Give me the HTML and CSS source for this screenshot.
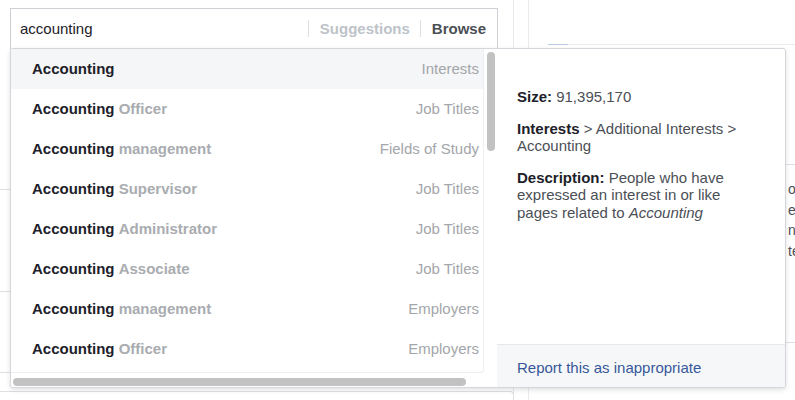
FILE: index.html
```html
<!DOCTYPE html>
<html lang="en">
<head>
<meta charset="utf-8">
<title>Detailed targeting</title>
<link rel="stylesheet" href="styles.css">
</head>
<body>
<div class="page">
  <div class="main-col">
    <div class="search">
      <span class="query">accounting</span>
      <div class="modes">
        <span class="sep"></span>
        <span class="mode mode-off">Suggestions</span>
        <span class="sep"></span>
        <span class="mode mode-on">Browse</span>
      </div>
    </div>
    <div class="bg-rows">
      <div class="bg-row r1"></div>
      <div class="bg-row r2"></div>
      <div class="bg-row r3"></div>
    </div>
    <div class="bg-card"></div>
  </div>
  <div class="gutter"></div>
  <div class="side">
    <div class="side-head"><span class="tab-mark"></span></div>
    <div class="side-card">
      <p>o</p>
      <p>er</p>
      <p>n</p>
      <p>te</p>
    </div>
  </div>

  <div class="dropdown">
    <div class="list-wrap">
      <ul class="list">
        <li class="row active"><span class="name"><b>Accounting</b></span><span class="kind">Interests</span></li>
        <li class="row"><span class="name"><b>Accounting</b> <i>Officer</i></span><span class="kind">Job Titles</span></li>
        <li class="row"><span class="name"><b>Accounting</b> <i>management</i></span><span class="kind">Fields of Study</span></li>
        <li class="row"><span class="name"><b>Accounting</b> <i>Supervisor</i></span><span class="kind">Job Titles</span></li>
        <li class="row"><span class="name"><b>Accounting</b> <i>Administrator</i></span><span class="kind">Job Titles</span></li>
        <li class="row"><span class="name"><b>Accounting</b> <i>Associate</i></span><span class="kind">Job Titles</span></li>
        <li class="row"><span class="name"><b>Accounting</b> <i>management</i></span><span class="kind">Employers</span></li>
        <li class="row"><span class="name"><b>Accounting</b> <i>Officer</i></span><span class="kind">Employers</span></li>
      </ul>
      <div class="vthumb"></div>
      <div class="hthumb"></div>
    </div>
    <div class="detail">
      <div class="detail-body">
        <p><b>Size:</b> 91,395,170</p>
        <p><b>Interests</b> &gt; Additional Interests &gt; Accounting</p>
        <p><b>Description:</b> People who have expressed an interest in or like pages related to <em>Accounting</em></p>
      </div>
      <div class="detail-foot"><a href="#" class="report">Report this as inappropriate</a></div>
    </div>
  </div>
</div>
</body>
</html>
```

FILE: styles.css
```css
* { box-sizing: border-box; }
html, body { margin: 0; padding: 0; background: #fff; }
body {
  font-family: "Liberation Sans", Arial, Helvetica, sans-serif;
  font-size: 15px;
  color: #1d2129;
}
.page {
  position: relative;
  width: 795px;
  height: 400px;
  overflow: hidden;
  display: flex;
}

/* background columns */
.main-col {
  width: 514px;
  border-right: 1px solid #e9ebee;
  display: flex;
  flex-direction: column;
}
.search {
  margin: 8px 0 0 10px;
  width: 488px;
  height: 42px;
  border: 1px solid #ccd0d5;
  display: flex;
  align-items: center;
  justify-content: space-between;
  padding: 0 11px 2px 9px;
  flex: none;
}
.query { color: #1d2129; }
.modes { display: flex; align-items: center; }
.sep {
  width: 1px;
  height: 17px;
  background: #dddfe2;
}
.mode { font-weight: bold; }
.sep + .mode { margin-left: 11px; }
.mode + .sep { margin-left: 10px; }
.mode-off { color: #bec3c9; }
.mode-on { color: #4b4f56; }

.bg-rows { width: 20px; margin-top: 139px; }
.bg-row { border-top: 1px solid #dddfe2; }
.r1 { height: 102px; }
.r2 { height: 81px; }
.r3 { height: 19px; }
.bg-card {
  width: 514px;
  height: 20px;
  border-top: 1px solid #dddfe2;
  border-right: 1px solid #dddfe2;
  border-top-right-radius: 4px;
}

.gutter {
  width: 15px;
  border-right: 1px solid #e9ebee;
}
.side { flex: 1; min-width: 0; }
.side-head {
  margin-left: 19px;
  height: 45px;
  border-bottom: 1px solid #e9ebee;
  position: relative;
}
.tab-mark {
  position: absolute;
  left: 0;
  bottom: -1px;
  width: 20px;
  height: 1px;
  background: #b9c9e6;
}
.side-card {
  margin-top: 119px;
  height: 179px;
  border-top: 1px solid #dddfe2;
  border-bottom: 1px solid #dddfe2;
  padding: 14px 0 0 259px;
  color: #4b4f56;
  font-size: 14px;
  white-space: nowrap;
}
.side-card p { margin: 0; line-height: 20.7px; }

/* dropdown overlay */
.dropdown {
  position: absolute;
  left: 10px;
  top: 48px;
  width: 776px;
  height: 340px;
  background: #fff;
  border: 1px solid #d3d6db;
  border-radius: 3px;
  box-shadow: 0 2px 5px rgba(0, 0, 0, 0.12);
  display: flex;
}
.list-wrap {
  position: relative;
  width: 486px;
  flex: none;
}
.list {
  list-style: none;
  margin: 0;
  padding: 0;
  width: 473px;
  height: 324px;
  border-right: 1px solid #eceef1;
  border-bottom: 1px solid #eceef1;
  border-bottom-right-radius: 3px;
  overflow: hidden;
}
.row {
  height: 40px;
  display: flex;
  align-items: center;
  justify-content: space-between;
  padding: 0 4px 2px 21px;
}
.row.active { background: #f5f6f7; }
.name b { font-weight: bold; color: #1d2129; }
.name i { font-style: normal; font-weight: bold; color: #a9acb0; }
.kind { color: #a3a6aa; }

.vthumb {
  position: absolute;
  left: 476px;
  top: 3px;
  width: 8px;
  height: 99px;
  border-radius: 4px;
  background: #c2c2c2;
}
.hthumb {
  position: absolute;
  left: 2px;
  top: 329px;
  width: 453px;
  height: 8px;
  border-radius: 4px;
  background: #c2c2c2;
}

.detail {
  flex: 1;
  display: flex;
  flex-direction: column;
}
.detail-body {
  flex: 1;
  padding: 39px 28px 0 20px;
  color: #4b4f56;
}
.detail-body p {
  margin: 0 0 14px;
  line-height: 17.5px;
}
.detail-body b { color: #1d2129; }
.detail-foot {
  height: 43px;
  border-top: 1px solid #e5e7ea;
  background: #f6f7f9;
  padding: 14px 0 0 20px;
  border-bottom-right-radius: 3px;
}
.report {
  color: #365899;
  text-decoration: none;
  line-height: 17px;
}
```
